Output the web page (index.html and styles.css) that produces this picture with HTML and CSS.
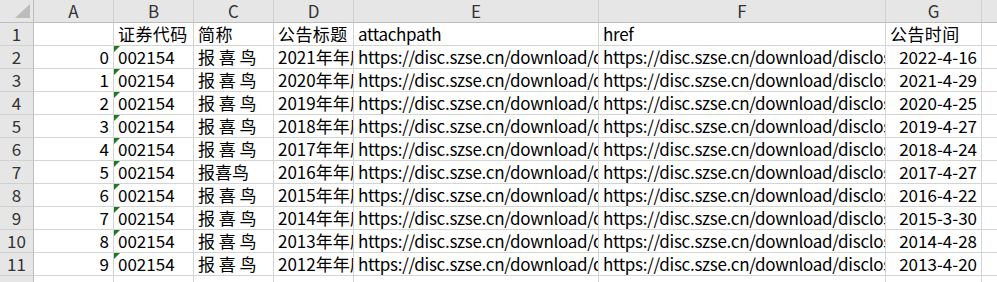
FILE: index.html
```html
<!DOCTYPE html>
<html>
<head>
<meta charset="utf-8">
<link rel="stylesheet" href="styles.css">
</head>
<body>
<div class="sheet">
  <div class="corner"><span class="corner-tri"></span></div>
  <div class="colhead">A</div>
  <div class="colhead">B</div>
  <div class="colhead">C</div>
  <div class="colhead">D</div>
  <div class="colhead">E</div>
  <div class="colhead">F</div>
  <div class="colhead">G</div>
  <div class="colhead last"></div>

  <div class="rowhead">1</div>
  <div class="cell"></div>
  <div class="cell cjk">证券代码</div>
  <div class="cell cjk">简称</div>
  <div class="cell cjk">公告标题</div>
  <div class="cell url">attachpath</div>
  <div class="cell url">href</div>
  <div class="cell cjk">公告时间</div>
  <div class="cell last"></div>

  <div class="rowhead">2</div>
  <div class="cell num">0</div>
  <div class="cell txt"><span class="tri"></span>002154</div>
  <div class="cell">报 喜 鸟</div>
  <div class="cell">2021年年度报告</div>
  <div class="cell url">https://disc.szse.cn/download/disc/disk03/finalpage/2022-04-16/1213049872.PDF</div>
  <div class="cell url">https://disc.szse.cn/download/disclosure/detail?stock=002154</div>
  <div class="cell num">2022-4-16</div>
  <div class="cell last"></div>

  <div class="rowhead">3</div>
  <div class="cell num">1</div>
  <div class="cell txt"><span class="tri"></span>002154</div>
  <div class="cell">报 喜 鸟</div>
  <div class="cell">2020年年度报告</div>
  <div class="cell url">https://disc.szse.cn/download/disc/disk03/finalpage/2021-04-29/1209825131.PDF</div>
  <div class="cell url">https://disc.szse.cn/download/disclosure/detail?stock=002154</div>
  <div class="cell num">2021-4-29</div>
  <div class="cell last"></div>

  <div class="rowhead">4</div>
  <div class="cell num">2</div>
  <div class="cell txt"><span class="tri"></span>002154</div>
  <div class="cell">报 喜 鸟</div>
  <div class="cell">2019年年度报告</div>
  <div class="cell url">https://disc.szse.cn/download/disc/disk03/finalpage/2020-04-25/1207590342.PDF</div>
  <div class="cell url">https://disc.szse.cn/download/disclosure/detail?stock=002154</div>
  <div class="cell num">2020-4-25</div>
  <div class="cell last"></div>

  <div class="rowhead">5</div>
  <div class="cell num">3</div>
  <div class="cell txt"><span class="tri"></span>002154</div>
  <div class="cell">报 喜 鸟</div>
  <div class="cell">2018年年度报告</div>
  <div class="cell url">https://disc.szse.cn/download/disc/disk03/finalpage/2019-04-27/1206152345.PDF</div>
  <div class="cell url">https://disc.szse.cn/download/disclosure/detail?stock=002154</div>
  <div class="cell num">2019-4-27</div>
  <div class="cell last"></div>

  <div class="rowhead">6</div>
  <div class="cell num">4</div>
  <div class="cell txt"><span class="tri"></span>002154</div>
  <div class="cell">报 喜 鸟</div>
  <div class="cell">2017年年度报告</div>
  <div class="cell url">https://disc.szse.cn/download/disc/disk03/finalpage/2018-04-24/1204748212.PDF</div>
  <div class="cell url">https://disc.szse.cn/download/disclosure/detail?stock=002154</div>
  <div class="cell num">2018-4-24</div>
  <div class="cell last"></div>

  <div class="rowhead">7</div>
  <div class="cell num">5</div>
  <div class="cell txt"><span class="tri"></span>002154</div>
  <div class="cell">报喜鸟</div>
  <div class="cell">2016年年度报告</div>
  <div class="cell url">https://disc.szse.cn/download/disc/disk03/finalpage/2017-04-27/1203417821.PDF</div>
  <div class="cell url">https://disc.szse.cn/download/disclosure/detail?stock=002154</div>
  <div class="cell num">2017-4-27</div>
  <div class="cell last"></div>

  <div class="rowhead">8</div>
  <div class="cell num">6</div>
  <div class="cell txt"><span class="tri"></span>002154</div>
  <div class="cell">报 喜 鸟</div>
  <div class="cell">2015年年度报告</div>
  <div class="cell url">https://disc.szse.cn/download/disc/disk03/finalpage/2016-04-22/1202233390.PDF</div>
  <div class="cell url">https://disc.szse.cn/download/disclosure/detail?stock=002154</div>
  <div class="cell num">2016-4-22</div>
  <div class="cell last"></div>

  <div class="rowhead">9</div>
  <div class="cell num">7</div>
  <div class="cell txt"><span class="tri"></span>002154</div>
  <div class="cell">报 喜 鸟</div>
  <div class="cell">2014年年度报告</div>
  <div class="cell url">https://disc.szse.cn/download/disc/disk03/finalpage/2015-03-30/1200745530.PDF</div>
  <div class="cell url">https://disc.szse.cn/download/disclosure/detail?stock=002154</div>
  <div class="cell num">2015-3-30</div>
  <div class="cell last"></div>

  <div class="rowhead">10</div>
  <div class="cell num">8</div>
  <div class="cell txt"><span class="tri"></span>002154</div>
  <div class="cell">报 喜 鸟</div>
  <div class="cell">2013年年度报告</div>
  <div class="cell url">https://disc.szse.cn/download/disc/disk03/finalpage/2014-04-28/63923071.PDF</div>
  <div class="cell url">https://disc.szse.cn/download/disclosure/detail?stock=002154</div>
  <div class="cell num">2014-4-28</div>
  <div class="cell last"></div>

  <div class="rowhead">11</div>
  <div class="cell num">9</div>
  <div class="cell txt"><span class="tri"></span>002154</div>
  <div class="cell">报 喜 鸟</div>
  <div class="cell">2012年年度报告</div>
  <div class="cell url">https://disc.szse.cn/download/disc/disk03/finalpage/2013-04-20/62371352.PDF</div>
  <div class="cell url">https://disc.szse.cn/download/disclosure/detail?stock=002154</div>
  <div class="cell num">2013-4-20</div>
  <div class="cell last"></div>

  <div class="rowhead tail"></div>
  <div class="cell tail"></div>
  <div class="cell tail"></div>
  <div class="cell tail"></div>
  <div class="cell tail"></div>
  <div class="cell tail"></div>
  <div class="cell tail"></div>
  <div class="cell tail"></div>
  <div class="cell tail last"></div>
</div>
</body>
</html>
```

FILE: styles.css
```css
html, body {
  margin: 0;
  padding: 0;
  background: #ffffff;
  overflow: hidden;
}

.sheet {
  display: grid;
  grid-template-columns: 34px 80px 80px 80px 80px 245px 287px 96px 1fr;
  grid-template-rows: repeat(12, 23px) 6px;
  height: 282px;
  overflow: hidden;
  font-family: "Noto Sans CJK SC", "Noto Sans", sans-serif;
  font-size: 17px;
  color: #000000;
}

.corner,
.colhead,
.rowhead,
.cell {
  box-sizing: border-box;
  overflow: hidden;
  white-space: nowrap;
  line-height: 22px;
}

.corner {
  position: relative;
  background: #e6e6e6;
  border-right: 1px solid #bdbdbd;
  border-bottom: 1px solid #bdbdbd;
}

.corner-tri {
  position: absolute;
  right: 3px;
  bottom: 4px;
  width: 0;
  height: 0;
  border-left: 15px solid transparent;
  border-bottom: 14px solid #bcbcbc;
}

.colhead {
  background: #e6e6e6;
  border-right: 1px solid #d0d0d0;
  border-bottom: 1px solid #bdbdbd;
  text-align: center;
  color: #333333;
}

.rowhead {
  background: #e6e6e6;
  border-right: 1px solid #bdbdbd;
  border-bottom: 1px solid #d0d0d0;
  text-align: center;
  color: #333333;
}

.cell {
  position: relative;
  border-right: 1px solid #d4d4d4;
  border-bottom: 1px solid #d4d4d4;
  padding: 0 3px 0 4px;
}

.cell.cjk {
  letter-spacing: 0.4px;
}

.cell.url {
  letter-spacing: -0.3px;
}

.cell.num {
  text-align: right;
  padding-right: 4px;
}

.tail {
  border-bottom: none;
}

.tri {
  position: absolute;
  left: 0;
  top: 0;
  width: 0;
  height: 0;
  border-top: 6px solid #1f7a1f;
  border-right: 6px solid transparent;
}

.last {
  border-right: none;
}
```
